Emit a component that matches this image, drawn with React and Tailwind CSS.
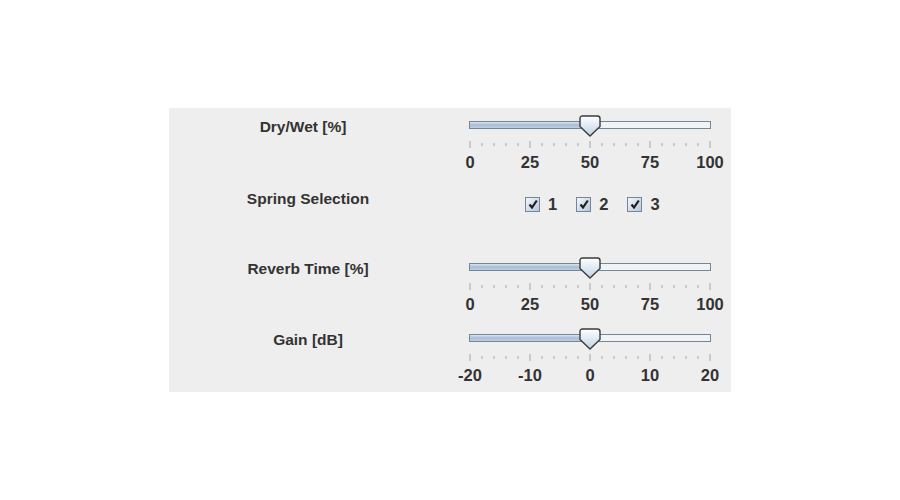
import React from 'react';

const font = { fontFamily: '"Liberation Sans", Arial, sans-serif' };

// Java Metal style slider: track, pentagon thumb, ticks and tick labels
const Slider = ({ value, min, max, minor, labels }) => {
  const pct = ((value - min) / (max - min)) * 100;
  const count = Math.round((max - min) / minor);
  const ticks = Array.from({ length: count + 1 }, (_, i) => min + i * minor);

  return (
    <div className="relative w-[242px] h-[60px]">
      {/* track */}
      <div className="absolute left-0 right-0 top-[6px] h-[8px] border border-[#76869a] bg-[#f1f4f7] flex">
        <div
          className="h-full bg-gradient-to-b from-[#dbe6f1] via-[#a7bcd4] to-[#bfd0e3]"
          style={{ width: pct + '%' }}
        />
      </div>
      {/* thumb */}
      <svg
        className="absolute top-0 -translate-x-1/2"
        style={{ left: pct + '%' }}
        width="23"
        height="22"
        viewBox="0 0 23 22"
      >
        <defs>
          <linearGradient id="thumbGrad" x1="0" y1="0" x2="0" y2="1">
            <stop offset="0" stopColor="#ffffff" />
            <stop offset="1" stopColor="#c0d2e5" />
          </linearGradient>
        </defs>
        <path
          d="M1.5 3.5 Q1.5 1 4 1 H19 Q21.5 1 21.5 3.5 V11.5 L11.5 21 L1.5 11.5 Z"
          fill="url(#thumbGrad)"
          stroke="#3b3b3b"
          strokeWidth="1.4"
        />
      </svg>
      {/* ticks */}
      <div className="absolute left-[1px] right-[1px] top-[26px] h-[7px]">
        {ticks.map((t, i) => {
          const major = labels.includes(t);
          return (
            <div
              key={i}
              className={
                'absolute top-0 w-px -translate-x-1/2 bg-[#a6a6a6] ' +
                (major ? 'h-[7px]' : 'h-[3px] mt-[2px]')
              }
              style={{ left: (i / count) * 100 + '%' }}
            />
          );
        })}
      </div>
      {/* tick labels */}
      <div className="absolute left-[1px] right-[1px] top-[38px] h-[19px]">
        {labels.map((l) => (
          <span
            key={l}
            className="absolute top-0 -translate-x-1/2 text-[16.5px] leading-[19px] font-bold text-[#333333]"
            style={{ left: ((l - min) / (max - min)) * 100 + '%' }}
          >
            {l}
          </span>
        ))}
      </div>
    </div>
  );
};

const CheckBox = ({ label }) => (
  <div className="flex items-center gap-[8px]">
    <div className="w-[15px] h-[15px] border border-[#76869a] bg-gradient-to-br from-[#f4f7fa] to-[#b6c8dc] flex items-center justify-center">
      <svg width="10" height="10" viewBox="0 0 10 10">
        <path d="M1.5 5.5 L4 8.5 L8.8 1.5" fill="none" stroke="#1e1e1e" strokeWidth="2.2" />
      </svg>
    </div>
    <span className="text-[16.5px] leading-none font-bold text-[#333333]">{label}</span>
  </div>
);

const Label = ({ children }) => (
  <div className="w-[278px] flex justify-center text-[15.5px] leading-[18px] font-bold text-[#333333]">
    {children}
  </div>
);

export default function App() {
  return (
    <div className="w-[900px] h-[500px] bg-white pt-[108px] pl-[169px]" style={font}>
      <div className="w-[562px] h-[284px] bg-[#eeeeee] flex flex-col" style={{ paddingTop: 7 }}>
        {/* Dry/Wet */}
        <div className="flex items-start h-[60px]">
          <div className="pt-[3px] -ml-[5px]">
            <Label>Dry/Wet [%]</Label>
          </div>
          <div className="ml-[27px]">
            <Slider value={50} min={0} max={100} minor={5} labels={[0, 25, 50, 75, 100]} />
          </div>
        </div>

        {/* Spring Selection */}
        <div className="flex items-center h-[60px] -mt-[2px]">
          <div className="mb-[8px]">
            <Label>Spring Selection</Label>
          </div>
          <div className="ml-[78px] mt-[2px] flex items-center gap-[19px]">
            <CheckBox label="1" />
            <CheckBox label="2" />
            <CheckBox label="3" />
          </div>
        </div>

        {/* Reverb Time */}
        <div className="flex items-start h-[60px] mt-[24px]">
          <div className="pt-[3px]">
            <Label>Reverb Time [%]</Label>
          </div>
          <div className="ml-[22px]">
            <Slider value={50} min={0} max={100} minor={5} labels={[0, 25, 50, 75, 100]} />
          </div>
        </div>

        {/* Gain */}
        <div className="flex items-start h-[60px] mt-[11px]">
          <div className="pt-[3px]">
            <Label>Gain [dB]</Label>
          </div>
          <div className="ml-[22px]">
            <Slider value={0} min={-20} max={20} minor={2} labels={[-20, -10, 0, 10, 20]} />
          </div>
        </div>
      </div>
    </div>
  );
}
